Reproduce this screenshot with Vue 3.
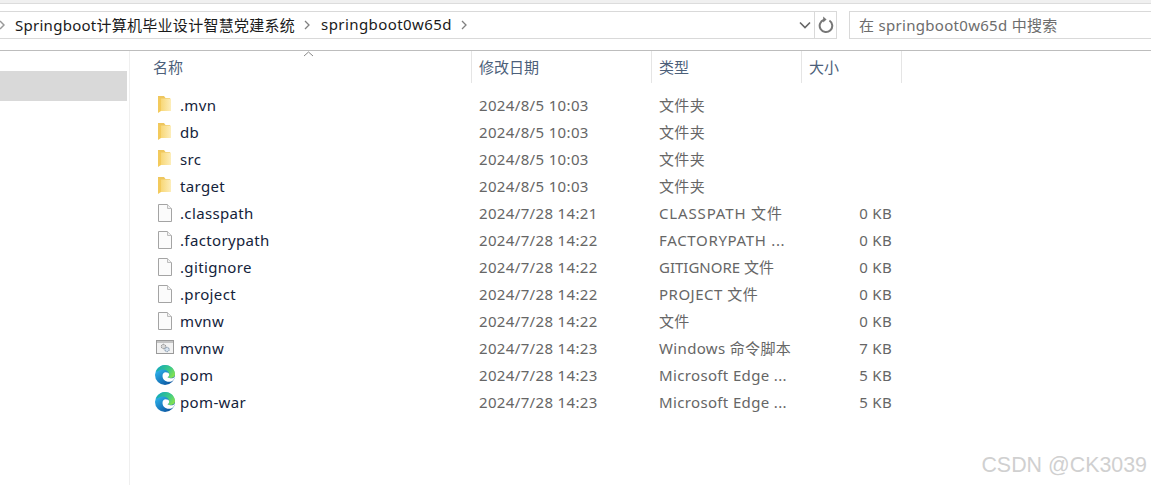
<script setup>
const rows = [
  { name: '.mvn', icon: 'folder', date: '2024/8/5 10:03', type: '文件夹', size: '' },
  { name: 'db', icon: 'folder', date: '2024/8/5 10:03', type: '文件夹', size: '' },
  { name: 'src', icon: 'folder', date: '2024/8/5 10:03', type: '文件夹', size: '' },
  { name: 'target', icon: 'folder', date: '2024/8/5 10:03', type: '文件夹', size: '' },
  { name: '.classpath', icon: 'file', date: '2024/7/28 14:21', type: 'CLASSPATH 文件', size: '0 KB', track: 'wide' },
  { name: '.factorypath', icon: 'file', date: '2024/7/28 14:22', type: 'FACTORYPATH ...', size: '0 KB', track: 'mid' },
  { name: '.gitignore', icon: 'file', date: '2024/7/28 14:22', type: 'GITIGNORE 文件', size: '0 KB', track: 'tight' },
  { name: '.project', icon: 'file', date: '2024/7/28 14:22', type: 'PROJECT 文件', size: '0 KB', track: 'loose' },
  { name: 'mvnw', icon: 'file', date: '2024/7/28 14:22', type: '文件', size: '0 KB' },
  { name: 'mvnw', icon: 'script', date: '2024/7/28 14:23', type: 'Windows 命令脚本', size: '7 KB' },
  { name: 'pom', icon: 'edge', date: '2024/7/28 14:23', type: 'Microsoft Edge ...', size: '5 KB' },
  { name: 'pom-war', icon: 'edge', date: '2024/7/28 14:23', type: 'Microsoft Edge ...', size: '5 KB' },
]
</script>

<template>
  <div class="win">
    <div class="topband"></div>
    <div class="toolbar">
      <div class="address">
        <svg class="chev first" width="6" height="10" viewBox="0 0 6 10"><path d="M1 1l4 4-4 4" fill="none" stroke="#999" stroke-width="1.500"/></svg>
        <span class="crumb">Springboot计算机毕业设计智慧党建系统</span>
        <svg class="chev" width="6" height="10" viewBox="0 0 6 10"><path d="M1 1l4 4-4 4" fill="none" stroke="#808080" stroke-width="1.300"/></svg>
        <span class="crumb folder-crumb">springboot0w65d</span>
        <svg class="chev" width="6" height="10" viewBox="0 0 6 10"><path d="M1 1l4 4-4 4" fill="none" stroke="#808080" stroke-width="1.300"/></svg>
        <span class="grow"></span>
        <svg class="drop" width="12" height="8" viewBox="0 0 12 8"><path d="M1 1.500l5 5 5-5" fill="none" stroke="#666" stroke-width="1.600"/></svg>
        <span class="refresh">
          <svg width="16" height="18" viewBox="0 0 16 18"><path d="M6 3.800A6.300 6.300 0 1 0 11.400 4.500" fill="none" stroke="#777" stroke-width="2"/><path d="M5.200 0.600v6l3.400-3z" fill="#777"/></svg>
        </span>
      </div>
      <div class="search">在 springboot0w65d 中搜索</div>
    </div>
    <div class="body">
      <aside class="side"><div class="selected"></div></aside>
      <main class="main">
        <div class="head">
          <div class="hcell c-name">名称<svg class="sort" width="11" height="6" viewBox="0 0 11 6"><path d="M1 5l4.500-4 4.500 4" fill="none" stroke="#888"/></svg></div>
          <div class="hcell c-date">修改日期</div>
          <div class="hcell c-type">类型</div>
          <div class="hcell c-size">大小</div>
        </div>
        <div class="list">
          <div class="row" v-for="(r, i) in rows" :key="i">
            <div class="c-name cellname">
              <span class="ico" :class="'ico-' + r.icon">
                <svg v-if="r.icon === 'folder'" width="13" height="17" viewBox="0 0 13 17">
                  <defs><linearGradient :id="'f' + i" x1="0" x2="1" y1="0" y2="0"><stop offset="0" stop-color="#f8d777"/><stop offset="1" stop-color="#fdeebb"/></linearGradient></defs>
                  <path d="M0 0h6l1.500 2H12v13H0z" fill="#eec65e"/>
                  <path d="M3 2.500h10V15H3z" :fill="'url(#f' + i + ')'"/>
                  <path d="M0 0.500l3 2V15L0 17z" fill="#f3ca5c"/>
                </svg>
                <svg v-else-if="r.icon === 'file'" width="14" height="18" viewBox="0 0 14 18">
                  <path d="M0.500 0.500h9l4 4v13h-13z" fill="#fbfbfb" stroke="#a4a4a4"/>
                  <path d="M9.500 0.500v4h4" fill="#f0f0f0" stroke="#bdbdbd"/>
                </svg>
                <svg v-else-if="r.icon === 'script'" width="18" height="14" viewBox="0 0 18 14">
                  <rect x="0.500" y="0.500" width="17" height="13" fill="#f2f2f2" stroke="#9a9a9a"/>
                  <rect x="1" y="1" width="16" height="2" fill="#c4c4c4"/>
                  <circle cx="7.500" cy="6.500" r="2.200" fill="#d8d8d8" stroke="#8a8a8a" stroke-dasharray="1.500 .6"/>
                  <circle cx="11" cy="9.500" r="2.200" fill="#d6e2ee" stroke="#7b8fa5" stroke-dasharray="1.500 .6"/>
                </svg>
                <svg v-else width="20" height="20" viewBox="0 0 20 20">
                  <defs>
                    <linearGradient :id="'e' + i" x1="0.100" x2="0.700" y1="0.200" y2="1"><stop offset="0" stop-color="#2fb6ee"/><stop offset="1" stop-color="#0b55a0"/></linearGradient>
                    <linearGradient :id="'g' + i" x1="0" x2="1" y1="0.200" y2="0.700"><stop offset="0" stop-color="#15a9b4"/><stop offset="0.600" stop-color="#3dcb87"/><stop offset="1" stop-color="#86e24e"/></linearGradient>
                  </defs>
                  <circle cx="10" cy="10" r="10" :fill="'url(#e' + i + ')'"/>
                  <path d="M1.500 5C4 1.500 7 0 10 0c6 0 10 4.500 10 9 0 3-2.500 4-4.500 4-1.500 0-2.500-.3-3-.7 1-.5 1.700-1.500 1.700-2.800C14.200 7 11.500 4.500 8 4.500 5.500 4.500 3.500 5.500 1.500 7z" :fill="'url(#g' + i + ')'"/>
                  <path d="M7.500 11c0-2.500 1.500-3.700 3-3.700 2 0 3.700.7 3.700 2.200 0 1.300-.7 2.300-1.700 2.800 1 .7 2.500 1 3.500 1 1.500 0 3-.5 4-1.800-.5 3-2.500 5.300-6 5.300-4 0-6.500-2.800-6.500-5.800z" fill="#fff"/>
                </svg>
              </span>
              <span class="fname">{{ r.name }}</span>
            </div>
            <div class="c-date cell">{{ r.date }}</div>
            <div class="c-type cell" :class="r.track">{{ r.type }}</div>
            <div class="c-size cell sizeval">{{ r.size }}</div>
          </div>
        </div>
      </main>
    </div>
    <div class="mark">CSDN @CK3039</div>
  </div>
</template>

<style scoped>
.win {
  position: relative;
  width: 1151px;
  height: 485px;
  overflow: hidden;
  background: #fff;
  font-family: "Noto Sans", "Noto Sans CJK SC", sans-serif;
  font-size: 15px;
  letter-spacing: 0.3px;
  color: #1a1a1a;
}
.topband { height: 3px; background: #f0f0f0; border-bottom: 1px solid #dcdcdc; }
.toolbar {
  display: flex;
  box-sizing: border-box;
  height: 47px;
  padding-top: 7px;
  border-bottom: 1px solid #bdbdbd;
}
.address {
  display: flex;
  align-items: center;
  width: 837px;
  height: 28px;
  box-sizing: border-box;
  border: 1px solid #d9d9d9;
  border-left: 0;
}
.chev { margin: 0 11px 0 9px; flex: none; }
.chev.first { margin: 0 10px 0 -1px; }
.crumb { white-space: nowrap; margin-top: -2px; letter-spacing: 0.27px; }
.folder-crumb { letter-spacing: 0.42px; }
.grow { flex: 1; }
.drop { margin-right: 3px; }
.refresh {
  display: flex;
  align-items: center;
  justify-content: center;
  width: 21px;
  height: 26px;
  border-left: 1px solid #d9d9d9;
}
.search {
  margin-left: 12px;
  flex: 1;
  height: 28px;
  box-sizing: border-box;
  border: 1px solid #d9d9d9;
  border-right: 0;
  padding-left: 9px;
  line-height: 27px;
  color: #6d6d6d;
}
.body { display: flex; height: 434px; }
.side { width: 130px; box-sizing: border-box; flex: none; border-right: 1px solid #efefef; padding-top: 20px; }
.selected { width: 127px; height: 30px; background: #d9d9d9; }
.main { flex: 1; }
.head { display: flex; height: 32px; }
.hcell {
  position: relative;
  height: 32px;
  line-height: 32px;
  color: #4c607a;
  font-size: 15px;
  letter-spacing: 0;
  padding-left: 7px;
  box-sizing: border-box;
  border-right: 1px solid #e5e5e5;
}
.head .c-name { padding-left: 23px; }
.c-name { width: 342px; flex: none; }
.c-date { width: 180px; flex: none; }
.c-type { width: 150px; flex: none; }
.c-size { width: 100px; flex: none; }
.sort { position: absolute; left: 173px; top: 0; }
.list { padding-top: 9px; }
.row { display: flex; height: 27px; align-items: center; line-height: 27px; white-space: nowrap; }
.cellname { display: flex; align-items: center; color: #14233b; }
.ico { width: 50px; display: flex; padding-left: 25px; box-sizing: border-box; flex: none; margin-top: -2px; }
.ico-folder svg, .ico-file svg { margin-left: 3px; }
.ico-script svg { margin-left: 1px; margin-top: -1px; }
.fname { letter-spacing: 0.35px; }
.cell { padding-left: 7px; box-sizing: border-box; color: #666; letter-spacing: 0.35px; }
.wide { letter-spacing: 0.85px; }
.mid { letter-spacing: 0.68px; }
.loose { letter-spacing: 0.5px; }
.tight { letter-spacing: 0; }
.sizeval { text-align: right; padding-right: 10px; letter-spacing: 0.3px; }
.mark {
  position: absolute;
  right: 4px;
  bottom: 7px;
  font-family: "Liberation Sans", sans-serif;
  font-size: 21.400px;
  letter-spacing: 0;
  color: #d0d0d0;
}
</style>
